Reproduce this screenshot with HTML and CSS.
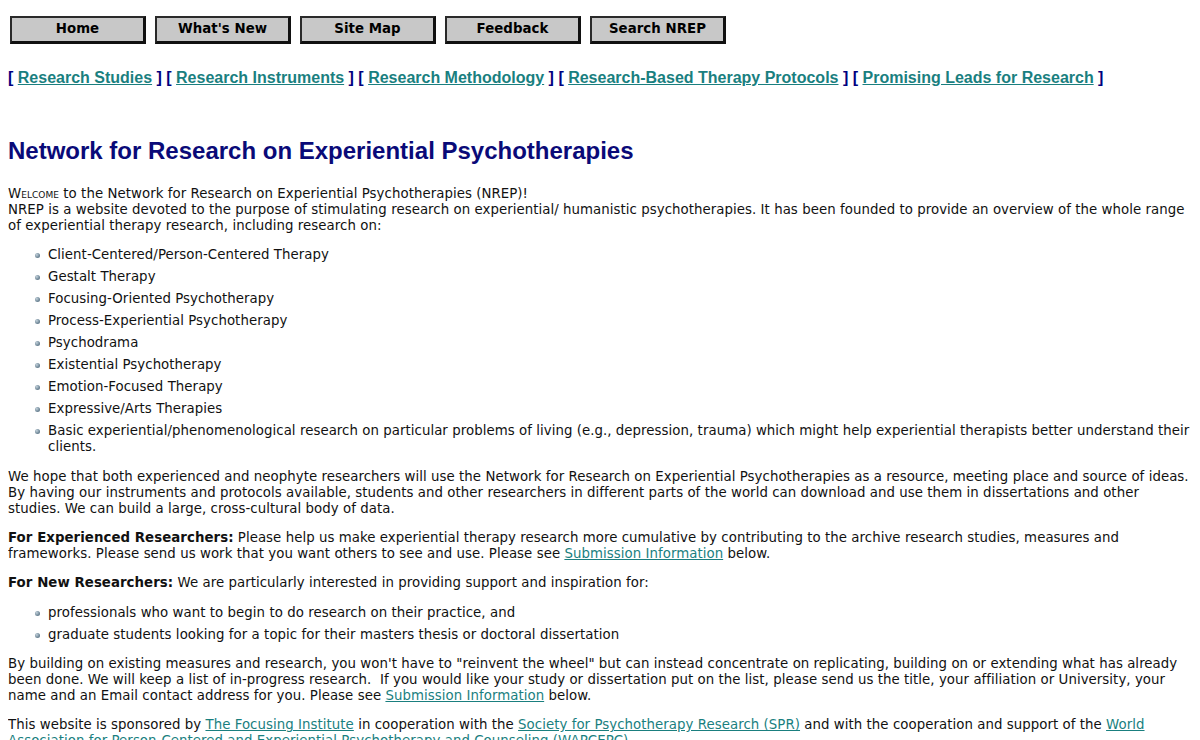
FILE: index.html
```html
<!DOCTYPE html>
<html lang="en">
<head>
    <meta charset="UTF-8">
    <title>Network for Research on Experiential Psychotherapies</title>
    <link rel="stylesheet" href="styles.css">
</head>
<body>

    <!-- Botoes de navegacao -->
    <div class="nav">
        <a class="nav-btn" href="#">Home</a>
        <a class="nav-btn" href="#">What's New</a>
        <a class="nav-btn" href="#">Site Map</a>
        <a class="nav-btn" href="#">Feedback</a>
        <a class="nav-btn" href="#">Search NREP</a>
    </div>

    <!-- Links de secao -->
    <p class="sections">
        [ <a href="#">Research Studies</a> ] [ <a href="#">Research Instruments</a> ] [ <a href="#">Research Methodology</a> ] [ <a href="#">Research-Based Therapy Protocols</a> ] [ <a href="#">Promising Leads for Research</a> ]
    </p>

    <h1>Network for Research on Experiential Psychotherapies</h1>

    <div class="content">
        <p class="intro">
            <span class="caps">Welcome</span> to the Network for Research on Experiential Psychotherapies (NREP)!<br>
            NREP is a website devoted to the purpose of stimulating research on experiential/ humanistic psychotherapies. It has been founded to provide an overview of the whole range of experiential therapy research, including research on:
        </p>
        <ul class="dots">
            <li>Client-Centered/Person-Centered Therapy</li>
            <li>Gestalt Therapy</li>
            <li>Focusing-Oriented Psychotherapy</li>
            <li>Process-Experiential Psychotherapy</li>
            <li>Psychodrama</li>
            <li>Existential Psychotherapy</li>
            <li>Emotion-Focused Therapy</li>
            <li>Expressive/Arts Therapies</li>
            <li>Basic experiential/phenomenological research on particular problems of living (e.g., depression, trauma) which might help experiential therapists better understand their clients.</li>
        </ul>
        <p>We hope that both experienced and neophyte researchers will use the Network for Research on Experiential Psychotherapies as a resource, meeting place and source of ideas. By having our instruments and protocols available, students and other researchers in different parts of the world can download and use them in dissertations and other studies. We can build a large, cross-cultural body of data.</p>
        <p><strong>For Experienced Researchers:</strong> Please help us make experiential therapy research more cumulative by contributing to the archive research studies, measures and frameworks. Please send us work that you want others to see and use. Please see <a href="#">Submission Information</a> below.</p>
        <p><strong>For New Researchers:</strong> We are particularly interested in providing support and inspiration for:</p>
        <ul class="dots">
            <li>professionals who want to begin to do research on their practice, and</li>
            <li>graduate students looking for a topic for their masters thesis or doctoral dissertation</li>
        </ul>
        <p>By building on existing measures and research, you won't have to "reinvent the wheel" but can instead concentrate on replicating, building on or extending what has already been done. We will keep a list of in-progress research.&nbsp; If you would like your study or dissertation put on the list, please send us the title, your affiliation or University, your name and an Email contact address for you. Please see <a href="#">Submission Information</a> below.</p>
        <p>This website is sponsored by <a href="#">The Focusing Institute</a> in cooperation with the <a href="#">Society for Psychotherapy Research (SPR)</a> and with the cooperation and support of the <a href="#">World Association for Person-Centered and Experiential Psychotherapy and Counseling (WAPCEPC)</a>.</p>
    </div>

</body>
</html>
```

FILE: styles.css
```css
body {
    margin: 8px;
    background-color: #fff;
    color: #111;
    font-family: "DejaVu Sans", Verdana, sans-serif;
    font-size: 10pt;
    letter-spacing: 0.05px;
    line-height: 16px;
}
/* Botoes */
.nav {
    display: flex;
    gap: 9px;
    margin-top: 8px;
    padding-left: 2px;
}
.nav-btn {
    display: block;
    box-sizing: border-box;
    width: 136px;
    height: 28px;
    line-height: 22px;
    background: #c8c8c8;
    border-top: 2px solid #2a2a2a;
    border-left: 2px solid #2a2a2a;
    border-right: 3px solid #111;
    border-bottom: 3px solid #111;
    color: #000;
    font-weight: bold;
    text-align: center;
    text-decoration: none;
}
/* Links de secao */
.sections {
    margin: 25px 0 0;
    font-family: "Liberation Sans", Arial, sans-serif;
    font-size: 16px;
    font-weight: bold;
    letter-spacing: 0;
    line-height: 18px;
    color: #000080;
}
.sections a {
    color: #1a7f7f;
}
h1 {
    margin: 50px 0 21px;
    font-family: "Liberation Sans", Arial, sans-serif;
    font-size: 24px;
    letter-spacing: 0;
    line-height: 28px;
    color: #0a0a78;
}
.content p {
    margin: 1em 0;
}
.content p.intro {
    margin-top: 0;
}
.caps {
    font-variant: small-caps;
}
.content a {
    color: #1a7f7f;
}
.dots {
    list-style: none;
    margin: 1em 0;
    padding-left: 40px;
}
.dots li {
    position: relative;
}
.dots li + li {
    margin-top: 6px;
}
.dots li::before {
    content: "";
    position: absolute;
    left: -13px;
    top: 6px;
    width: 5px;
    height: 5px;
    border-radius: 50%;
    background: radial-gradient(circle at 35% 35%, #c4d2dc, #6f8797 60%, #52687a);
}
```
